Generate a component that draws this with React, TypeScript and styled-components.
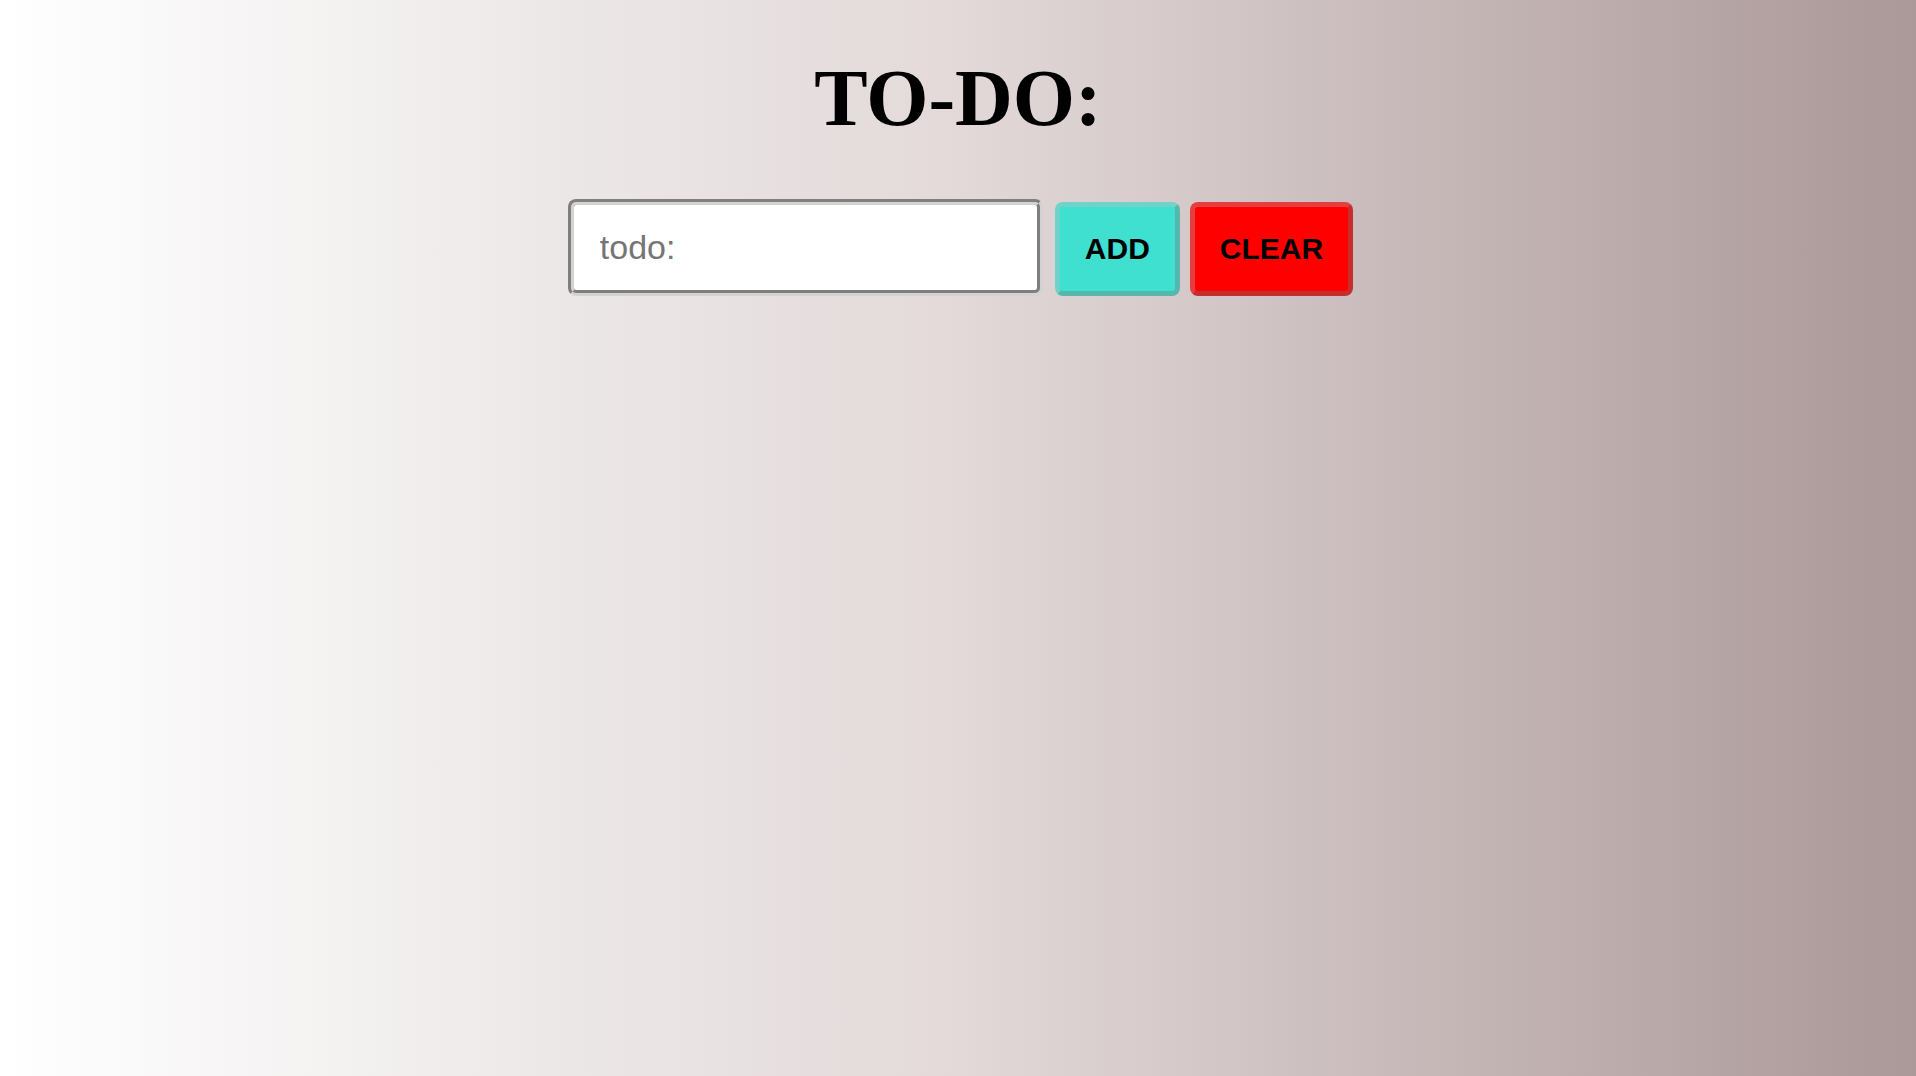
import React, { useState } from "react";
import styled, { createGlobalStyle } from "styled-components";

const GlobalStyle = createGlobalStyle`
  html, body {
    margin: 0;
    padding: 0;
  }
  body {
    font-family: "Liberation Serif", "Times New Roman", serif;
  }
  * { box-sizing: border-box; }
`;

const Page = styled.div`
  min-height: 100vh;
  width: 100%;
  background: linear-gradient(to right, #ffffff 0%, #ece7e7 30%, #e3d9d9 50%, #c9bbbb 72%, #ab9898 100%);
  display: flex;
  flex-direction: column;
  align-items: center;
`;

const Title = styled.h1`
  margin: 53px 0 0;
  font-family: "Liberation Serif", "Times New Roman", serif;
  font-size: 80px;
  font-weight: bold;
  color: #000;
  line-height: normal;
`;

const Form = styled.form`
  display: flex;
  align-items: baseline;
  justify-content: center;
  margin: 55px 0 0 5px;
`;

const TodoInput = styled.input`
  width: 475px;
  padding: 23px 20px 23px 26px;
  font-family: "Liberation Sans", Arial, sans-serif;
  font-size: 34px;
  line-height: normal;
  color: #000;
  background: #fff;
  border: 6px groove lightgray;
  border-radius: 8px;
  outline: none;
  margin-right: 12px;

  &::placeholder {
    color: #757575;
  }
`;

const ActionButton = styled.button<{ $fill: string; $light: string; $dark: string }>`
  font-family: "Liberation Sans", Arial, sans-serif;
  font-size: 30px;
  font-weight: bold;
  line-height: normal;
  color: #000;
  background: ${(p) => p.$fill};
  border: 5px solid;
  border-color: ${(p) => `${p.$light} ${p.$dark} ${p.$dark} ${p.$light}`};
  border-radius: 8px;
  padding: 25px;
  cursor: pointer;
  margin-right: 10px;

  &:last-child {
    margin-right: 0;
  }
`;

export default function App() {
  const [value, setValue] = useState("");
  return (
    <>
      <GlobalStyle />
      <Page>
        <Title>TO-DO:</Title>
        <Form onSubmit={(e) => e.preventDefault()}>
          <TodoInput
            type="text"
            placeholder="todo:"
            value={value}
            onChange={(e) => setValue(e.target.value)}
          />
          <ActionButton type="submit" $fill="#40e0d0" $light="#6fd3c9" $dark="#56b8ad">
            ADD
          </ActionButton>
          <ActionButton type="button" $fill="#ff0000" $light="#e53e3e" $dark="#c62e2e" onClick={() => setValue("")}>
            CLEAR
          </ActionButton>
        </Form>
      </Page>
    </>
  );
}
